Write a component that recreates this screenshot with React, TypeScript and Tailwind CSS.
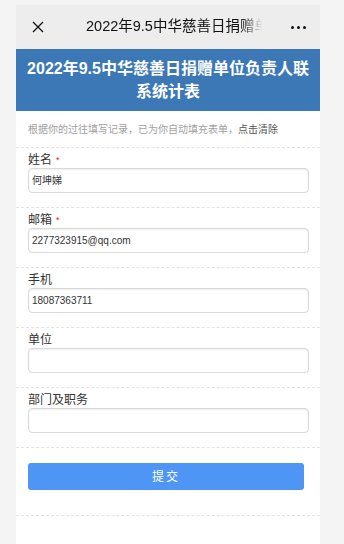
const fields = [
  { label: "姓名", required: true, value: "何坤娣" },
  { label: "邮箱", required: true, value: "2277323915@qq.com" },
  { label: "手机", required: false, value: "18087363711" },
  { label: "单位", required: false, value: "" },
  { label: "部门及职务", required: false, value: "" },
];

export default function App() {
  return (
    <div className="min-h-[544px] bg-[#f4f4f4] pt-[5px] font-['Liberation_Sans','Noto_Sans_CJK_SC',sans-serif]">
      <div className="ml-4 w-[304px] min-h-[539px] bg-white flex flex-col">
        {/* nav bar */}
        <div className="h-[44px] bg-[#ededed] flex items-center">
          <div className="w-[70px] pl-[16px] flex items-center">
            <svg width="12" height="12" viewBox="0 0 12 12" fill="none" stroke="#111" strokeWidth="1.3">
              <path d="M1 1L11 11M11 1L1 11" />
            </svg>
          </div>
          <div className="flex-1 overflow-hidden whitespace-nowrap text-[14.5px] text-[#111] [mask-image:linear-gradient(to_right,black_88%,transparent)]">
            2022年9.5中华慈善日捐赠单位负责人联系统计表
          </div>
          <div className="w-[58px] pl-[29px] flex items-center gap-[3px]">
            <span className="w-[3px] h-[3px] rounded-full bg-[#111]" />
            <span className="w-[3px] h-[3px] rounded-full bg-[#111]" />
            <span className="w-[3px] h-[3px] rounded-full bg-[#111]" />
          </div>
        </div>

        {/* header */}
        <div className="h-[62px] bg-[#3c78b6] flex items-center justify-center px-[10px] text-center text-white font-bold text-[16px] leading-[23px]">
          2022年9.5中华慈善日捐赠单位负责人联系统计表
        </div>

        {/* notice */}
        <div className="h-[37px] border-b border-dashed border-[#e3e3e3] pl-[12px] flex items-center text-[10px] text-[#a0a0a0]">
          根据你的过往填写记录，已为你自动填充表单，<span className="text-[#555]">点击清除</span>
        </div>

        {fields.map((f) => (
          <div key={f.label} className="border-b border-dashed border-[#e3e3e3] pt-[5px] pb-[14px] pl-[12px] pr-[11px]">
            <div className="h-[15px] leading-[15px] text-[12px] text-[#333]">
              {f.label}
              {f.required && <span className="ml-[4px] text-[9px] text-[#e02020] align-top">*</span>}
            </div>
            <div className="h-[25px] border border-[#d9d9d9] rounded-[4px] shadow-[inset_0_1px_2px_rgba(0,0,0,0.07)] flex items-center pl-[3px] text-[10px] text-[#333]">
              {f.value}
            </div>
          </div>
        ))}

        {/* submit */}
        <div className="border-b border-dashed border-[#e3e3e3] pt-[15px] pb-[25px] pl-[12px] pr-[16px]">
          <div className="h-[27px] rounded-[3px] bg-[#4e95f6] flex items-center justify-center text-[12px] tracking-[2px] text-white">
            提交
          </div>
        </div>
      </div>
    </div>
  );
}
